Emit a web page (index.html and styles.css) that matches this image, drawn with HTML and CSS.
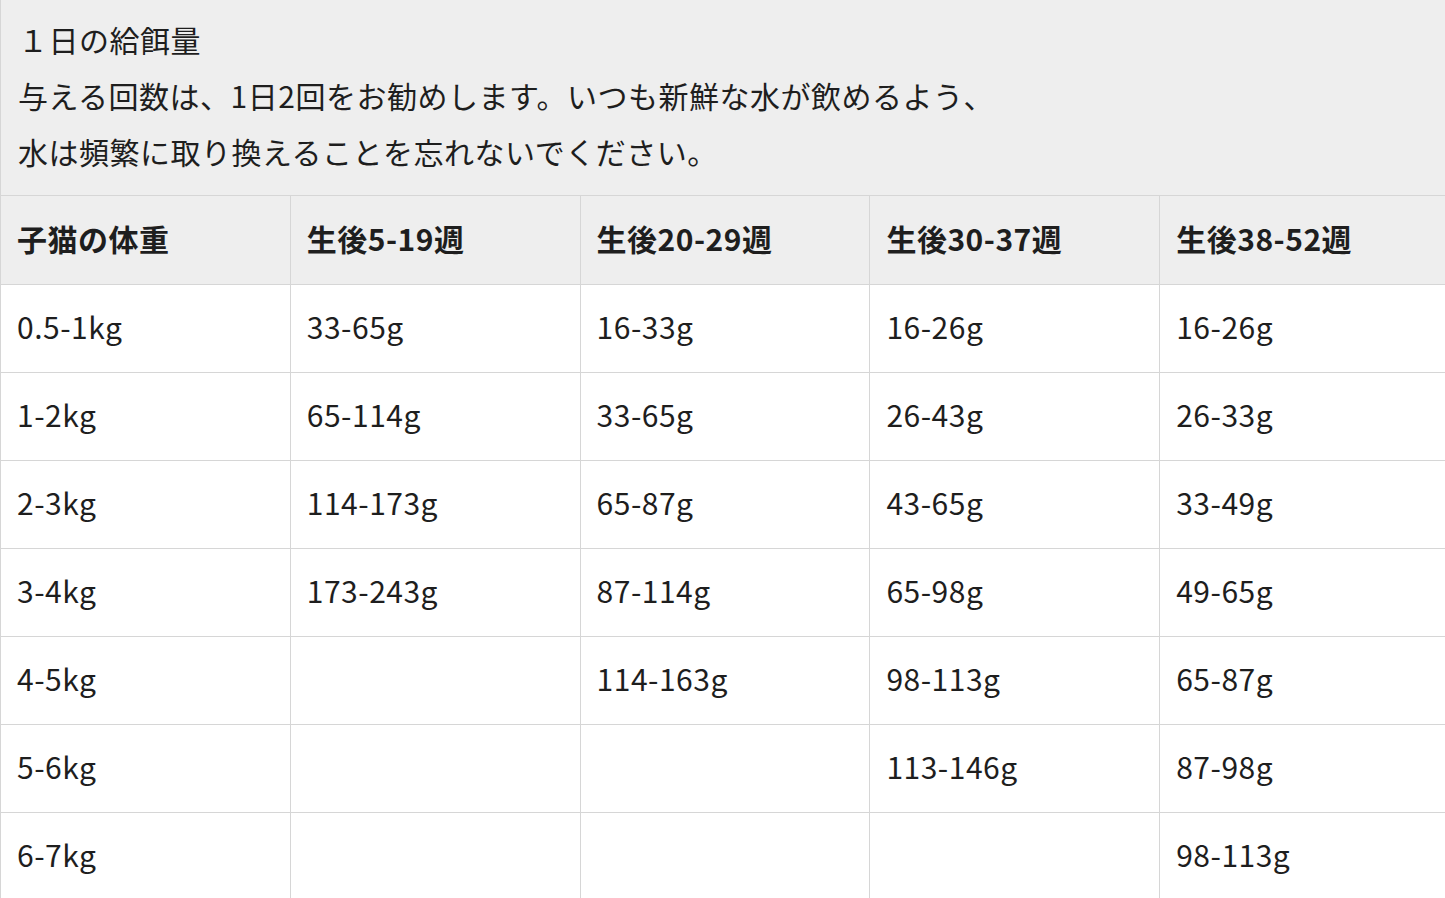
FILE: index.html
```html
<!DOCTYPE html>
<html lang="ja">
<head>
<meta charset="utf-8">
<title>1日の給餌量</title>
<link rel="stylesheet" href="styles.css">
</head>
<body>
<table class="feed">
  <caption class="feed-caption">１日の給餌量<br>与える回数は、1日2回をお勧めします。いつも新鮮な水が飲めるよう、<br>水は頻繁に取り換えることを忘れないでください。</caption>
  <thead>
    <tr>
      <th>子猫の体重</th>
      <th>生後5-19週</th>
      <th>生後20-29週</th>
      <th>生後30-37週</th>
      <th>生後38-52週</th>
    </tr>
  </thead>
  <tbody>
    <tr><td>0.5-1kg</td><td>33-65g</td><td>16-33g</td><td>16-26g</td><td>16-26g</td></tr>
    <tr><td>1-2kg</td><td>65-114g</td><td>33-65g</td><td>26-43g</td><td>26-33g</td></tr>
    <tr><td>2-3kg</td><td>114-173g</td><td>65-87g</td><td>43-65g</td><td>33-49g</td></tr>
    <tr><td>3-4kg</td><td>173-243g</td><td>87-114g</td><td>65-98g</td><td>49-65g</td></tr>
    <tr><td>4-5kg</td><td></td><td>114-163g</td><td>98-113g</td><td>65-87g</td></tr>
    <tr><td>5-6kg</td><td></td><td></td><td>113-146g</td><td>87-98g</td></tr>
    <tr><td>6-7kg</td><td></td><td></td><td></td><td>98-113g</td></tr>
  </tbody>
</table>
</body>
</html>
```
FILE: styles.css
```css
html, body {
  margin: 0;
  padding: 0;
  background: #ffffff;
  overflow: hidden;
}
body {
  font-family: "Noto Sans CJK JP", "Noto Sans", sans-serif;
  color: #1e1e1e;
  font-size: 30px;
  letter-spacing: 0.5px;
}
.feed {
  width: 1450px;
  table-layout: fixed;
  border-collapse: collapse;
}
.feed-caption {
  caption-side: top;
  text-align: left;
  background: #eeeeee;
  border-left: 1px solid #d6d6d6;
  padding: 11px 17px 16px 17px;
  line-height: 56px;
}
.feed th,
.feed td {
  border: 1px solid #d6d6d6;
  height: 82px;
  padding: 0 0 5px 16px;
  text-align: left;
  vertical-align: middle;
  line-height: 40px;
}
.feed th {
  background: #eeeeee;
  font-weight: 700;
  height: 83px;
}
```
